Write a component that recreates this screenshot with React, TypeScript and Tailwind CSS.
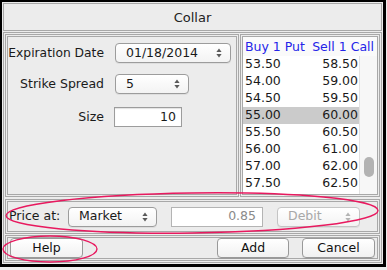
import React from "react";

const rows: [string, string][] = [
  ["53.50", "58.50"],
  ["54.00", "59.00"],
  ["54.50", "59.50"],
  ["55.00", "60.00"],
  ["55.50", "60.50"],
  ["56.00", "61.00"],
  ["57.00", "62.00"],
  ["57.50", "62.50"],
];

function Arrows({ disabled }: { disabled?: boolean }) {
  const c = disabled ? "#b4b4b4" : "#5a5a5a";
  return (
    <svg width="6" height="10" viewBox="0 0 6 10" className="shrink-0">
      <path d="M3 0.5 L5.6 4 L0.4 4 Z" fill={c} />
      <path d="M3 9.5 L5.6 6 L0.4 6 Z" fill={c} />
    </svg>
  );
}

function Select({
  value,
  width,
  disabled,
}: {
  value: string;
  width: string;
  disabled?: boolean;
}) {
  return (
    <div
      className={`flex h-[20px] items-center justify-between rounded-[4px] border bg-linear-to-b from-white to-[#f3f3f3] pl-[10px] pr-[8px] shadow-[0_1px_0_rgba(0,0,0,0.06)] ${width} ${
        disabled ? "border-[#c4c4c4] text-[#a8a8a8]" : "border-[#9c9c9c] text-[#1a1a1a]"
      }`}
    >
      <span>{value}</span>
      <Arrows disabled={disabled} />
    </div>
  );
}

function Button({ label, width }: { label: string; width: string }) {
  return (
    <div
      className={`flex h-[20px] items-center justify-center rounded-[4px] border border-[#999999] bg-linear-to-b from-white to-[#f1f1f1] text-[#111] shadow-[0_1px_0_rgba(0,0,0,0.08)] ${width}`}
    >
      {label}
    </div>
  );
}

export default function App() {
  return (
    <div className="relative h-[270px] w-[387px] bg-[#eeeeee] font-['DejaVu_Sans',sans-serif] text-[12.5px] leading-none text-[#1a1a1a]">
      <div className="flex h-[267px] w-[386px] flex-col border-b-[3px] border-l-2 border-r-[3px] border-t-2 border-black bg-[#ececec] p-[1px]">
        {/* title */}
        <div className="mb-[1px] flex h-[28px] shrink-0 items-center justify-center border border-[#a8a8a8] text-[13px] text-[#222]">
          Collar
        </div>

        {/* content */}
        <div className="flex min-h-0 flex-1 flex-col border border-[#a8a8a8] p-[1px]">
          {/* top section */}
          <div className="flex h-[163px] shrink-0 gap-[1px]">
            <div className="w-[234px] border-[3px] border-double border-[#a8a8a8] pt-[6px]">
              <div className="grid grid-cols-[96px_auto] items-center gap-x-[11px] gap-y-[11px]">
                <span className="whitespace-nowrap text-right text-[12.3px]">Expiration Date</span>
                <Select value="01/18/2014" width="w-[116px]" />
                <span className="whitespace-nowrap text-right">Strike Spread</span>
                <Select value="5" width="w-[74px]" />
                <span className="mt-[2px] text-right">Size</span>
                <div className="ml-[-1px] mt-[2px] flex h-[20px] w-[68px] items-center justify-end border border-[#9c9c9c] bg-white pr-[5px] shadow-[inset_0_1px_1px_rgba(0,0,0,0.12)]">
                  10
                </div>
              </div>
            </div>

            <div className="flex flex-1 flex-col border-[3px] border-double border-[#a8a8a8]">
              <div className="flex h-[19px] shrink-0 items-center justify-between bg-[#fafafa] pl-[2px] pr-[3px] pt-[1px] text-[#2424e8]">
                <span>Buy 1 Put</span>
                <span>Sell 1 Call</span>
              </div>
              <div className="flex min-h-0 flex-1">
                <div className="flex-1 bg-white">
                  {rows.map(([a, b], i) => (
                    <div
                      key={a}
                      className={`flex h-[17px] items-center justify-between pl-[2px] pr-[1px] ${
                        i === 3 ? "bg-[#cbcbcb]" : ""
                      }`}
                    >
                      <span>{a}</span>
                      <span>{b}</span>
                    </div>
                  ))}
                </div>
                <div className="flex w-[18px] flex-col border-l border-[#e2e2e2] bg-[#f7f7f7] pl-[4px] pt-[101px]">
                  <div className="h-[20px] w-[10px] rounded-full bg-[#b3b3b3]" />
                </div>
              </div>
            </div>
          </div>

          {/* price section */}
          <div className="mt-[2px] flex h-[35px] shrink-0 items-center border-[3px] border-double border-[#a8a8a8] pl-[1px]">
            <span className="w-[59px]">Price at:</span>
            <Select value="Market" width="w-[89px]" />
            <div className="ml-[14px] flex h-[20px] w-[92px] items-center justify-end border border-[#b4b4b4] bg-white pr-[6px] text-[#8a8a8a]">
              0.85
            </div>
            <div className="ml-[14px]">
              <Select value="Debit" width="w-[83px]" disabled />
            </div>
          </div>

          {/* buttons */}
          <div className="mt-[1px] flex flex-1 items-center border-[3px] border-double border-[#a8a8a8] px-[2px]">
            <Button label="Help" width="w-[73px]" />
            <div className="flex-1" />
            <Button label="Add" width="w-[72px]" />
            <div className="w-[13px]" />
            <Button label="Cancel" width="w-[73px]" />
          </div>
        </div>
      </div>

      {/* annotation ellipses */}
      <svg
        className="pointer-events-none absolute left-0 top-0"
        width="387"
        height="270"
        viewBox="0 0 387 270"
      >
        <ellipse
          cx="192"
          cy="213"
          rx="186"
          ry="20"
          transform="rotate(-0.8 192 213)"
          fill="none"
          stroke="#e8195f"
          strokeWidth="1.4"
        />
        <ellipse
          cx="50"
          cy="249"
          rx="47"
          ry="13"
          fill="none"
          stroke="#e8195f"
          strokeWidth="1.4"
        />
      </svg>
    </div>
  );
}
